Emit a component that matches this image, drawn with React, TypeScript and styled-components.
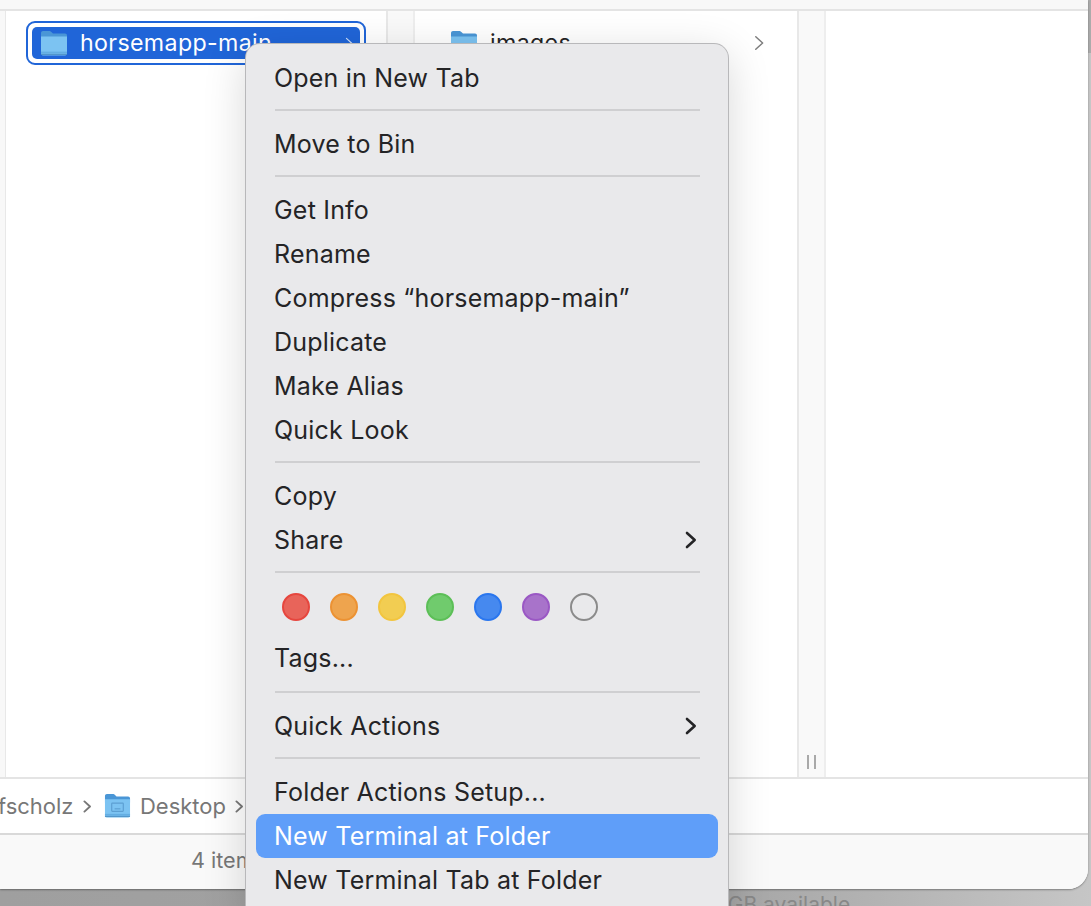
import styled, { createGlobalStyle } from "styled-components";

const GlobalStyle = createGlobalStyle`
  html, body {
    margin: 0;
    padding: 0;
  }
  body {
    font-family: Inter, "Liberation Sans", sans-serif;
  }
`;

const Page = styled.div`
  position: relative;
  width: 1091px;
  height: 906px;
  overflow: hidden;
  display: flex;
  flex-direction: column;
  background:
    linear-gradient(#ababab 0 53px, transparent 53px),
    linear-gradient(90deg, #9f9f9f 0%, #a4a4a4 65%, #c6c6c6 100%);
`;

const FinderWindow = styled.div`
  width: 1088px;
  height: 889px;
  flex: none;
  box-sizing: border-box;
  display: flex;
  flex-direction: column;
  background: #ffffff;
  border-bottom-right-radius: 20px;
  box-shadow: 0 1px 2px rgba(0, 0, 0, 0.35);
  overflow: hidden;
`;

const TopStrip = styled.div`
  height: 9px;
  flex: none;
  background: #f8f8f8;
  border-bottom: 2px solid #e4e4e4;
`;

const Columns = styled.div`
  flex: 1;
  min-height: 0;
  display: flex;
`;

const EdgeGutter = styled.div`
  width: 5px;
  flex: none;
  background: #f8f8f8;
  border-right: 1px solid #e8e8e8;
`;

const Column = styled.div<{ $width?: number }>`
  flex: ${(p) => (p.$width ? `0 0 ${p.$width}px` : "1")};
  box-sizing: border-box;
  padding-top: 10px;
`;

const Gutter = styled.div`
  flex: 0 0 29px;
  box-sizing: border-box;
  background: #f9f9f9;
  border-left: 2px solid #e8e8e8;
  border-right: 2px solid #eeeeee;
  display: flex;
  align-items: flex-end;
  justify-content: center;
  padding-bottom: 8px;
`;

const Grip = styled.div`
  width: 9px;
  height: 14px;
  box-sizing: border-box;
  border-left: 2px solid #a9a9a9;
  border-right: 2px solid #a9a9a9;
`;

const SelectedRing = styled.div`
  margin-left: 20px;
  width: 340px;
  height: 44px;
  box-sizing: border-box;
  padding: 4px;
  border: 2px solid #2065d8;
  border-radius: 9px;
`;

const FileRow = styled.div<{ $selected?: boolean }>`
  height: 32px;
  box-sizing: border-box;
  margin-top: ${(p) => (p.$selected ? 0 : "6px")};
  margin-left: ${(p) => (p.$selected ? 0 : "27px")};
  width: ${(p) => (p.$selected ? "auto" : "329px")};
  padding: 0 7px 0 8px;
  display: flex;
  align-items: center;
  gap: 12px;
  border-radius: 5px;
  font-size: 23.2px;
  letter-spacing: 0.35px;
  color: ${(p) => (p.$selected ? "#ffffff" : "#242426")};
  background: ${(p) => (p.$selected ? "#2065d8" : "transparent")};
`;

const FileName = styled.span`
  flex: 1;
  line-height: 32px;
`;

const PathBar = styled.div`
  height: 58px;
  flex: none;
  box-sizing: border-box;
  display: flex;
  align-items: center;
  border-top: 2px solid #e4e4e4;
  border-bottom: 2px solid #d9d9d9;
  font-size: 22px;
  color: #777777;
  white-space: nowrap;
`;

const PathRoot = styled.span`
  margin-left: -2px;
`;

const PathSep = styled.span`
  display: flex;
  margin: 0 13px 0 9px;
`;

const PathFolder = styled.span`
  display: flex;
  margin-right: 9px;
`;

const StatusBar = styled.div`
  height: 54px;
  flex: none;
  box-sizing: border-box;
  padding: 0 0 4px 191px;
  display: flex;
  align-items: center;
  background: #f9f9f9;
  font-size: 21.6px;
  color: #777777;
  white-space: nowrap;
`;

const BehindText = styled.div`
  padding-left: 709px;
  padding-top: 3px;
  font-size: 21px;
  line-height: 26px;
  color: #888888;
  white-space: nowrap;
`;

const Menu = styled.div`
  position: absolute;
  left: 246px;
  top: 44px;
  width: 482px;
  height: 880px;
  box-sizing: border-box;
  padding: 12px 10px;
  background: #e9e9eb;
  border-radius: 14px;
  box-shadow:
    0 0 0 1px #b8b8ba,
    0 10px 44px rgba(0, 0, 0, 0.16);
  font-size: 25px;
  letter-spacing: 0.2px;
  color: #242426;
`;

const MenuItem = styled.div<{ $active?: boolean }>`
  height: 44px;
  box-sizing: border-box;
  padding: 0 21px 0 18px;
  display: flex;
  align-items: center;
  justify-content: space-between;
  border-radius: 9px;
  white-space: nowrap;
  color: ${(p) => (p.$active ? "#ffffff" : "inherit")};
  background: ${(p) => (p.$active ? "#5f9ef9" : "transparent")};
`;

const TagsItem = styled(MenuItem)`
  margin-bottom: 11px;
`;

const MenuSeparator = styled.div`
  height: 2px;
  margin: 9px 18px 11px 19px;
  background: #cfcfd1;
`;

const TagRow = styled.div`
  height: 52px;
  box-sizing: border-box;
  padding: 9px 0 0 26px;
  display: flex;
  gap: 20px;
`;

const TagDot = styled.span<{ $fill: string; $edge: string }>`
  width: 28px;
  height: 28px;
  box-sizing: border-box;
  border-radius: 50%;
  background: ${(p) => p.$fill};
  border: 2px solid ${(p) => p.$edge};
`;

const FolderIcon = ({ desktop = false, size = 28 }: { desktop?: boolean; size?: number }) => (
  <svg width={size} height={size * 0.93} viewBox="0 0 28 26" style={{ flex: "none" }}>
    <path d="M1 3.2C1 1.7 1.9 1 3 1h6.2c1 0 1.5.4 2.2 1.1L13 3.6h12c1.2 0 2 .8 2 2V10H1z" fill="#4a96d6" />
    <path d="M1 6.4h26v17.2c0 1-.8 1.8-1.8 1.8H2.8c-1 0-1.8-.8-1.8-1.8z" fill="#7cc3f2" />
    <rect x="1" y="21.6" width="26" height="2" fill="#64aee2" />
    <path d="M1 24.4h26" stroke="#4f92c6" strokeWidth="1" />
    {desktop && (
      <g fill="none" stroke="#5c9fd2" strokeWidth="1.2">
        <rect x="8" y="10.5" width="12" height="8.5" rx="0.6" />
        <path d="M11 16.4h6" />
      </g>
    )}
  </svg>
);

const Chevron = ({ color, size = 14, weight = 1.5 }: { color: string; size?: number; weight?: number }) => (
  <svg width={size * 0.65} height={size} viewBox="0 0 9 14" style={{ flex: "none" }}>
    <path d="M1.5 1.5 7.5 7l-6 5.5" fill="none" stroke={color} strokeWidth={weight} strokeLinecap="round" strokeLinejoin="round" />
  </svg>
);

const tagColors = [
  { fill: "#e8645a", edge: "#e6463e" },
  { fill: "#eea44e", edge: "#ec9233" },
  { fill: "#f2cd52", edge: "#f2c53f" },
  { fill: "#70cb6d", edge: "#5cbf57" },
  { fill: "#4689ef", edge: "#2a76ee" },
  { fill: "#a873ca", edge: "#9a58c4" },
  { fill: "transparent", edge: "#8b8b8b" },
];

const App = () => (
  <Page>
    <GlobalStyle />
    <FinderWindow>
      <TopStrip />
      <Columns>
        <EdgeGutter />
        <Column $width={380}>
          <SelectedRing>
            <FileRow $selected>
              <FolderIcon />
              <FileName>horsemapp-main</FileName>
              <Chevron color="#cfe0fa" size={13} weight={1.2} />
            </FileRow>
          </SelectedRing>
        </Column>
        <Gutter />
        <Column $width={382}>
          <FileRow>
            <FolderIcon />
            <FileName>images</FileName>
            <Chevron color="#7d7d7d" size={16} weight={1.3} />
          </FileRow>
        </Column>
        <Gutter>
          <Grip />
        </Gutter>
        <Column />
      </Columns>
      <PathBar>
        <PathRoot>fscholz</PathRoot>
        <PathSep>
          <Chevron color="#777777" size={13} weight={2} />
        </PathSep>
        <PathFolder>
          <FolderIcon desktop size={27} />
        </PathFolder>
        <span>Desktop</span>
        <PathSep>
          <Chevron color="#777777" size={13} weight={2} />
        </PathSep>
      </PathBar>
      <StatusBar>4 items</StatusBar>
    </FinderWindow>
    <BehindText>2 GB available</BehindText>
    <Menu>
      <MenuItem>Open in New Tab</MenuItem>
      <MenuSeparator />
      <MenuItem>Move to Bin</MenuItem>
      <MenuSeparator />
      <MenuItem>Get Info</MenuItem>
      <MenuItem>Rename</MenuItem>
      <MenuItem>Compress “horsemapp-main”</MenuItem>
      <MenuItem>Duplicate</MenuItem>
      <MenuItem>Make Alias</MenuItem>
      <MenuItem>Quick Look</MenuItem>
      <MenuSeparator />
      <MenuItem>Copy</MenuItem>
      <MenuItem>
        Share
        <Chevron color="#242426" size={18} weight={2} />
      </MenuItem>
      <MenuSeparator />
      <TagRow>
        {tagColors.map((c) => (
          <TagDot key={c.edge} $fill={c.fill} $edge={c.edge} />
        ))}
      </TagRow>
      <TagsItem>Tags...</TagsItem>
      <MenuSeparator />
      <MenuItem>
        Quick Actions
        <Chevron color="#242426" size={18} weight={2} />
      </MenuItem>
      <MenuSeparator />
      <MenuItem>Folder Actions Setup...</MenuItem>
      <MenuItem $active>New Terminal at Folder</MenuItem>
      <MenuItem>New Terminal Tab at Folder</MenuItem>
    </Menu>
  </Page>
);

export default App;
